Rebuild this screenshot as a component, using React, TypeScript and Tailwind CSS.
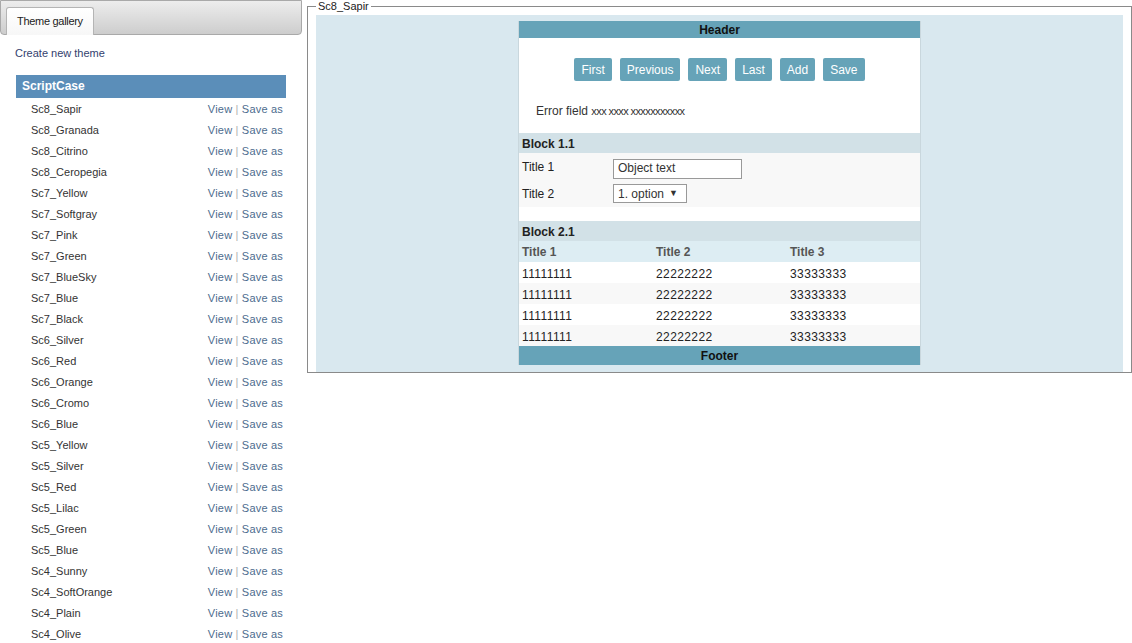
const themes = [
  "Sc8_Sapir", "Sc8_Granada", "Sc8_Citrino", "Sc8_Ceropegia",
  "Sc7_Yellow", "Sc7_Softgray", "Sc7_Pink", "Sc7_Green", "Sc7_BlueSky", "Sc7_Blue", "Sc7_Black",
  "Sc6_Silver", "Sc6_Red", "Sc6_Orange", "Sc6_Cromo", "Sc6_Blue",
  "Sc5_Yellow", "Sc5_Silver", "Sc5_Red", "Sc5_Lilac", "Sc5_Green", "Sc5_Blue",
  "Sc4_Sunny", "Sc4_SoftOrange", "Sc4_Plain", "Sc4_Olive",
];

const buttons = ["First", "Previous", "Next", "Last", "Add", "Save"];

function Sidebar() {
  return (
    <div className="w-[302px] shrink-0">
      <div className="h-[35px] rounded-b-[4px] border border-[#a9a9a9] bg-gradient-to-b from-[#ededed] to-[#cdcdcd] pl-[5px] pt-[6px]">
        <div className="h-[28px] w-[88px] rounded-t-[3px] border border-b-0 border-[#b4b4b4] bg-gradient-to-b from-white to-[#f7f7f7] pl-[10px] pt-[5px] text-[11px] tracking-[-0.3px] text-[#222]">
          Theme gallery
        </div>
      </div>
      <div className="pl-[15px] pt-[10px] text-[11px] text-[#33416e]">Create new theme</div>
      <div className="ml-[16px] mt-[13px] w-[270px]">
        <div className="h-[23px] bg-[#5b8eb9] pl-[6px] text-[12px] font-bold leading-[23px] text-white">ScriptCase</div>
        {themes.map((t) => (
          <div key={t} className="flex h-[21px] items-center justify-between pl-[15px] pr-[3px] pt-[2px] text-[11px]">
            <span className="text-[#333]">{t}</span>
            <span className="tracking-[0.2px] text-[#4d6c8e]">
              View <span className="text-[#b0b0b0]">|</span> Save as
            </span>
          </div>
        ))}
      </div>
    </div>
  );
}

function Preview() {
  const rowBg = ["bg-white", "bg-[#f8f8f8]", "bg-white", "bg-[#f8f8f8]"];
  return (
    <div className="w-[403px] border-x border-[#c9d7dd] bg-white text-[12px] text-[#222]">
      <div className="h-[17px] bg-[#66a3b8] text-center font-bold leading-[19px] text-[#111]">Header</div>
      <div className="flex justify-center gap-[8px] pt-[20px]">
        {buttons.map((b) => (
          <div key={b} className="h-[23px] rounded-[2px] bg-[#66a3b8] px-[7px] leading-[24px] text-white">{b}</div>
        ))}
      </div>
      <div className="h-[52px] pl-[17px] pt-[21px] text-[#333]">
        Error field <span className="text-[11px] tracking-[-0.6px]">xxx xxxx xxxxxxxxxxx</span>
      </div>
      <div className="h-[20px] bg-[#d2e1e7] pl-[3px] font-bold leading-[22px]">Block 1.1</div>
      <div className="bg-[#f8f8f8] pb-[4px] pl-[3px] pt-[5px]">
        <div className="flex h-[21px] items-center">
          <span className="w-[91px] pb-[3px]">Title 1</span>
          <div className="h-[20px] w-[129px] border border-[#999] bg-white pl-[4px] leading-[17px] text-[#333]">Object text</div>
        </div>
        <div className="mt-[5px] flex h-[19px] items-center">
          <span className="w-[91px]">Title 2</span>
          <div className="flex h-[19px] w-[74px] items-center justify-between border border-[#999] bg-white pl-[4px] pr-[8px] text-[#333]">
            1. option
            <span className="text-[9px]">▼</span>
          </div>
        </div>
      </div>
      <div className="h-[14px] bg-white" />
      <div className="h-[20px] bg-[#d2e1e7] pl-[3px] font-bold leading-[22px]">Block 2.1</div>
      <div className="grid h-[21px] grid-cols-[134px_134px_1fr] bg-[#ddedf3] pl-[3px] font-bold leading-[23px] text-[#555]">
        <span>Title 1</span>
        <span>Title 2</span>
        <span>Title 3</span>
      </div>
      {rowBg.map((bg, i) => (
        <div key={i} className={`grid h-[21px] grid-cols-[134px_134px_1fr] pl-[3px] leading-[24px] tracking-[0.4px] ${bg}`}>
          <span>11111111</span>
          <span>22222222</span>
          <span>33333333</span>
        </div>
      ))}
      <div className="h-[19px] bg-[#66a3b8] text-center font-bold leading-[21px] text-[#111]">Footer</div>
    </div>
  );
}

export default function App() {
  return (
    <div className="flex h-[643px] w-[1132px] overflow-hidden bg-white font-['Liberation_Sans',Arial,sans-serif]">
      <Sidebar />
      <fieldset className="ml-[5px] mt-0 h-[373px] w-[825px] border border-[#8a8a8a] px-[8px] pb-[6px] pt-[3px]">
        <legend className="px-[2px] text-[11px] leading-[12px] text-[#222]">Sc8_Sapir</legend>
        <div className="flex h-[357px] justify-center bg-[#d9e8ef] pt-[6px]">
          <div className="h-[344px]">
            <Preview />
          </div>
        </div>
      </fieldset>
    </div>
  );
}
